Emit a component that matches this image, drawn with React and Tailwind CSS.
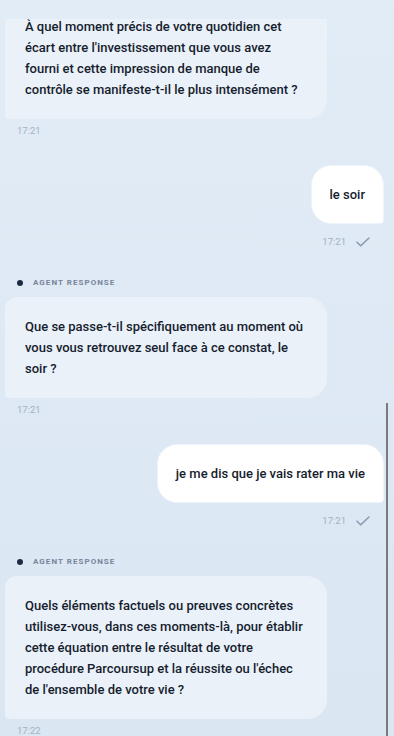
import React from "react";

const messages = [
  {
    id: 1,
    role: "agent",
    header: false,
    time: "17:21",
    text: "À quel moment précis de votre quotidien cet écart entre l'investissement que vous avez fourni et cette impression de manque de contrôle se manifeste-t-il le plus intensément ?",
  },
  { id: 2, role: "user", time: "17:21", text: "le soir" },
  {
    id: 3,
    role: "agent",
    header: true,
    time: "17:21",
    text: "Que se passe-t-il spécifiquement au moment où vous vous retrouvez seul face à ce constat, le soir ?",
  },
  { id: 4, role: "user", time: "17:21", text: "je me dis que je vais rater ma vie" },
  {
    id: 5,
    role: "agent",
    header: true,
    time: "17:22",
    text: "Quels éléments factuels ou preuves concrètes utilisez-vous, dans ces moments-là, pour établir cette équation entre le résultat de votre procédure Parcoursup et la réussite ou l'échec de l'ensemble de votre vie ?",
  },
];

function Check() {
  return (
    <svg width="14" height="10" viewBox="0 0 14 10" fill="none" aria-hidden>
      <path d="M1 5.2 L4.6 8.8 L13 1" stroke="#8d9db5" strokeWidth="1.6" strokeLinecap="round" strokeLinejoin="round" />
    </svg>
  );
}

function AgentMessage({ m, first }) {
  return (
    <div className={first ? "flex flex-col" : "mt-[29px] flex flex-col"}>
      {m.header && (
        <div className="mb-[9px] flex h-[10px] items-center gap-[10px] pl-[12px]">
          <span className="h-[6px] w-[6px] rounded-full bg-[#1c2a44]" />
          <span className="text-[8px] font-bold uppercase leading-none tracking-[0.13em] text-[#78849a]">
            Agent response
          </span>
        </div>
      )}
      <div className="max-w-[85%] rounded-[20px] rounded-tl-[12px] rounded-bl-[4px] bg-[#eaf1f9] px-5 py-[19px] text-[13px] font-medium leading-[21px] text-[#161d2e]">
        {m.text}
      </div>
      <div className="mt-[6px] pl-3 text-[9.5px] leading-[12px] text-[#a4b1c4]">{m.time}</div>
    </div>
  );
}

function UserMessage({ m }) {
  return (
    <div className="mt-[28px] flex flex-col items-end">
      <div className="max-w-[85%] rounded-[20px] rounded-br-[4px] border border-[#eef4fb] bg-white p-[18px] text-[13px] font-medium leading-[21px] text-[#161d2e]">
        {m.text}
      </div>
      <div className="mt-[11px] flex h-[14px] items-center gap-[10px] pr-[14px]">
        <span className="text-[9.5px] leading-[12px] text-[#a4b1c4]">{m.time}</span>
        <Check />
      </div>
    </div>
  );
}

export default function App() {
  return (
    <div className="relative h-[736px] w-[394px] overflow-hidden bg-gradient-to-b from-[#e2ecf7] to-[#dae6f2] [font-family:Roboto,'Noto_Sans',sans-serif]">
      <div className="mt-[19px] h-[717px] overflow-hidden">
        <div className="mt-[-22px] flex flex-col pl-[5px] pr-[10px]">
          {messages.map((m, i) =>
            m.role === "agent" ? (
              <AgentMessage key={m.id} m={m} first={i === 0} />
            ) : (
              <UserMessage key={m.id} m={m} />
            )
          )}
        </div>
      </div>
      <div className="absolute right-[6px] top-[403px] h-[333px] w-[2px] bg-[#7a7a7a]" />
    </div>
  );
}
